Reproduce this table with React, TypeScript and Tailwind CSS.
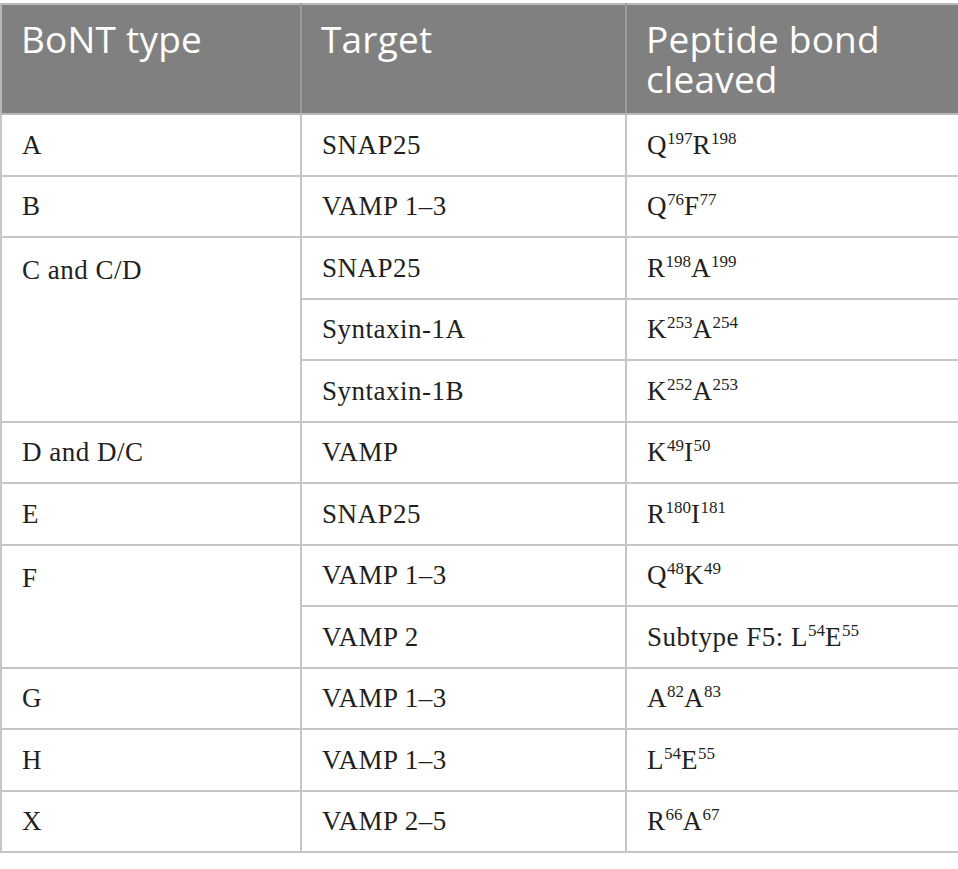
import React from "react";

type Cell = { base: string; sup: string }[];

const S = ({ parts }: { parts: Cell }) => (
  <>
    {parts.map((p, i) => (
      <React.Fragment key={i}>
        {p.base}
        <span className="relative top-[-10px] text-[17px] tracking-normal">{p.sup}</span>
      </React.Fragment>
    ))}
  </>
);

const bc = "border-2 border-[#c6c6c6]";
const td = `${bc} h-[61.5px] pl-[20px] pr-2 align-middle`;
const tdSpan = `${bc} pl-[20px] pr-2 align-top pt-[12px]`;

export default function App() {
  return (
    <div className="w-[958px] h-[869px] bg-white pt-[3px]">
      <table
        className="table-fixed border-collapse w-[958px] text-[#231f20] text-[27px] tracking-[0.5px]"
        style={{ fontFamily: '"Liberation Serif", serif' }}
      >
        <colgroup>
          <col className="w-[300px]" />
          <col className="w-[325px]" />
          <col className="w-[333px]" />
        </colgroup>
        <thead>
          <tr
            className="bg-[#7f807f] text-white text-[37px] leading-[40px] tracking-[0.2px]"
            style={{ fontFamily: '"Open Sans", sans-serif' }}
          >
            <th className="border-2 border-[#b8b8b8] border-r-[#9c9c9c] h-[110px] align-top text-left font-normal pl-[19px] pt-[14px] pr-2">
              BoNT type
            </th>
            <th className="border-2 border-[#b8b8b8] border-x-[#9c9c9c] align-top text-left font-normal pl-[19px] pt-[14px] pr-2">
              Target
            </th>
            <th className="border-2 border-[#b8b8b8] border-l-[#9c9c9c] align-top text-left font-normal pl-[19px] pt-[14px] pr-2">
              Peptide bond cleaved
            </th>
          </tr>
        </thead>
        <tbody>
          <tr>
            <td className={td}>A</td>
            <td className={td}>SNAP25</td>
            <td className={td}><S parts={[{ base: "Q", sup: "197" }, { base: "R", sup: "198" }]} /></td>
          </tr>
          <tr>
            <td className={td}>B</td>
            <td className={td}>VAMP 1–3</td>
            <td className={td}><S parts={[{ base: "Q", sup: "76" }, { base: "F", sup: "77" }]} /></td>
          </tr>
          <tr>
            <td className={tdSpan} rowSpan={3}>C and C/D</td>
            <td className={td}>SNAP25</td>
            <td className={td}><S parts={[{ base: "R", sup: "198" }, { base: "A", sup: "199" }]} /></td>
          </tr>
          <tr>
            <td className={td}>Syntaxin-1A</td>
            <td className={td}><S parts={[{ base: "K", sup: "253" }, { base: "A", sup: "254" }]} /></td>
          </tr>
          <tr>
            <td className={td}>Syntaxin-1B</td>
            <td className={td}><S parts={[{ base: "K", sup: "252" }, { base: "A", sup: "253" }]} /></td>
          </tr>
          <tr>
            <td className={td}>D and D/C</td>
            <td className={td}>VAMP</td>
            <td className={td}><S parts={[{ base: "K", sup: "49" }, { base: "I", sup: "50" }]} /></td>
          </tr>
          <tr>
            <td className={td}>E</td>
            <td className={td}>SNAP25</td>
            <td className={td}><S parts={[{ base: "R", sup: "180" }, { base: "I", sup: "181" }]} /></td>
          </tr>
          <tr>
            <td className={tdSpan} rowSpan={2}>F</td>
            <td className={td}>VAMP 1–3</td>
            <td className={td}><S parts={[{ base: "Q", sup: "48" }, { base: "K", sup: "49" }]} /></td>
          </tr>
          <tr>
            <td className={td}>VAMP 2</td>
            <td className={td}>
              Subtype F5: <S parts={[{ base: "L", sup: "54" }, { base: "E", sup: "55" }]} />
            </td>
          </tr>
          <tr>
            <td className={td}>G</td>
            <td className={td}>VAMP 1–3</td>
            <td className={td}><S parts={[{ base: "A", sup: "82" }, { base: "A", sup: "83" }]} /></td>
          </tr>
          <tr>
            <td className={td}>H</td>
            <td className={td}>VAMP 1–3</td>
            <td className={td}><S parts={[{ base: "L", sup: "54" }, { base: "E", sup: "55" }]} /></td>
          </tr>
          <tr>
            <td className={td}>X</td>
            <td className={td}>VAMP 2–5</td>
            <td className={td}><S parts={[{ base: "R", sup: "66" }, { base: "A", sup: "67" }]} /></td>
          </tr>
        </tbody>
      </table>
    </div>
  );
}
